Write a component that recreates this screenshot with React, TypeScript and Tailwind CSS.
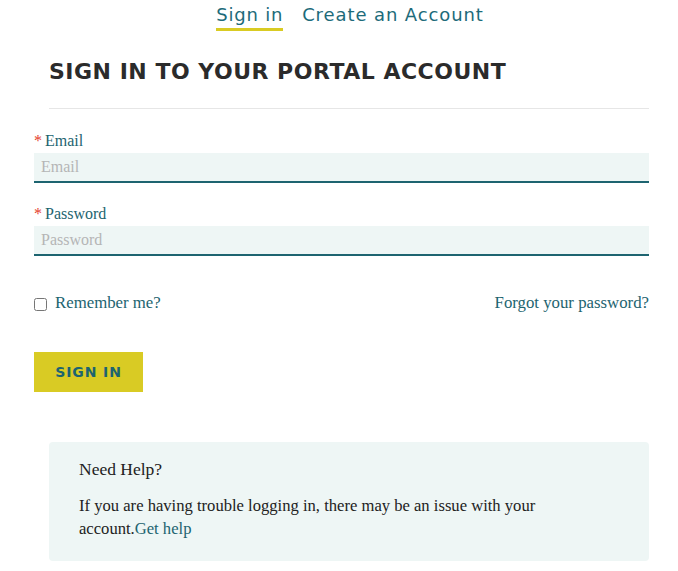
import React from 'react';

const serif = { fontFamily: '"Liberation Serif", "DejaVu Serif", serif' };
const wide = { fontFamily: '"DejaVu Sans", Inter, sans-serif' };

const Field = ({ label, type }: { label: string; type: string }) => (
  <div className="flex flex-col">
    <label className="text-[16px] leading-[20px] text-[#1d6470]" style={serif}>
      <span className="text-[#e53c2e] mr-[3px]">*</span>
      {label}
    </label>
    <input
      type={type}
      placeholder={label}
      className="mt-[2px] h-[30px] w-full bg-[#eef6f5] border-b-2 border-[#1d6470] px-[7px] text-[16px] text-gray-800 placeholder:text-[#b5b5b5] outline-none"
      style={serif}
    />
  </div>
);

export default function App() {
  return (
    <div className="w-[678px] min-h-[571px] bg-white">
      <nav className="flex justify-center gap-[19px] pt-[4px] pl-[22px]" style={wide}>
        <a className="text-[18px] leading-[22px] tracking-[0.8px] text-[#1d6b7a] border-b-[3px] border-[#d9cb23] pb-[2px]">Sign in</a>
        <a className="text-[18px] leading-[22px] tracking-[0.9px] text-[#1d6b7a]">Create an Account</a>
      </nav>

      <div className="pl-[49px] pr-[29px] pt-[28px]">
        <h1 className="text-[22px] leading-[26px] font-bold text-[#2b2b2b] tracking-[0.5px]" style={wide}>
          SIGN IN TO YOUR PORTAL ACCOUNT
        </h1>
        <div className="mt-[23px] h-px bg-[#e6e6e6]" />
      </div>

      <form className="pr-[29px] pl-[34px] pt-[22px] flex flex-col gap-[21px]">
        <Field label="Email" type="email" />
        <Field label="Password" type="password" />

        <div className="mt-[13px] flex items-center justify-between" style={serif}>
          <label className="flex items-center gap-[8px] text-[16.8px] text-[#1d6470]">
            <input type="checkbox" className="w-[13px] h-[13px] mt-[3px]" />
            Remember me?
          </label>
          <a className="text-[16.8px] text-[#1d6470]">Forgot your password?</a>
        </div>

        <div className="mt-[16px]">
          <button
            type="button"
            className="w-[109px] h-[40px] bg-[#d9cb24] text-[#1d6470] text-[14px] font-bold tracking-[0.9px]"
            style={wide}
          >
            SIGN IN
          </button>
        </div>
      </form>

      <div className="ml-[49px] mr-[29px] mt-[50px] rounded-[4px] bg-[#eef6f5] px-[30px] pt-[16px] pb-[21px]" style={serif}>
        <h2 className="text-[17.5px] leading-[22px] text-[#222]">Need Help?</h2>
        <p className="mt-[14px] text-[16.6px] leading-[23px] text-[#222] pr-[80px]">
          If you are having trouble logging in, there may be an issue with your account.<a className="text-[#1d6470]">Get help</a>
        </p>
      </div>
    </div>
  );
}
